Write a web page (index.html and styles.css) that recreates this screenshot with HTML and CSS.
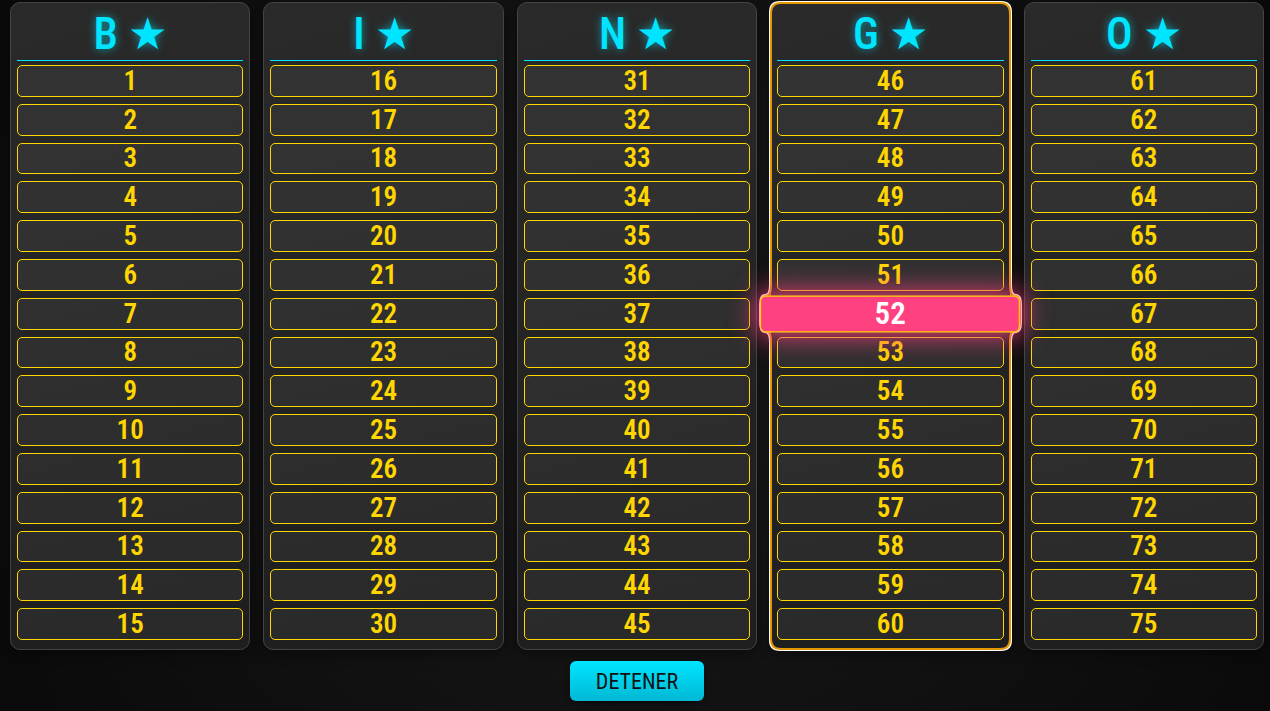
FILE: index.html
```html
<!DOCTYPE html>
<html lang="es">
<head>
<meta charset="utf-8">
<meta name="viewport" content="width=device-width, initial-scale=1">
<title>Bingo</title>
<link rel="stylesheet" href="styles.css">
</head>
<body>
<main class="board" id="board"></main>
<footer class="controls"><button class="stop" type="button">DETENER</button></footer>
<script src="board.js"></script>
</body>
</html>
```
FILE: styles.css
```css
* {
  box-sizing: border-box;
}

body {
  margin: 0;
  min-height: 100vh;
  display: flex;
  flex-direction: column;
  padding: 2px 6px 10px 10px;
  gap: 11px;
  overflow: hidden;
  background: radial-gradient(circle, #1a1a1a, #0a0a0a);
  font-family: "Roboto Condensed", "Liberation Sans Narrow", "Liberation Sans", sans-serif;
}

.board {
  flex: 1;
  display: grid;
  grid-template-columns: repeat(5, 1fr);
  gap: 13px;
}

.column {
  display: flex;
  flex-direction: column;
  gap: 7px;
  padding: 6px 6px 9px;
  border: 1px solid #444;
  border-radius: 10px;
  background: linear-gradient(165deg, #2a2a2a, #1e1e1e);
  box-shadow: 0 4px 12px rgba(0, 0, 0, 0.4);
}

.column.active {
  position: relative;
  border-color: #e59700;
  outline: #e59700 auto 1px;
}

.heading {
  margin: 0 0 -3px;
  height: 52px;
  border-bottom: 1px solid #00e5ff;
  color: #00e5ff;
  font-size: 44px;
  font-weight: 500;
  line-height: 50px;
  text-align: center;
  text-shadow: 0 0 8px rgba(0, 229, 255, 0.6);
}

.cell {
  flex: 1;
  display: flex;
  align-items: center;
  justify-content: center;
  border: 1px solid #ffd600;
  border-radius: 5px;
  background: rgba(255, 255, 255, 0.05);
  color: #ffd600;
  font-size: 27px;
  font-weight: 600;
  line-height: 28px;
}

.cell.called {
  z-index: 1;
  background: #ff4081;
  color: #fff;
  transform: scale(1.15);
  box-shadow: 0 0 24px 2px #ff4081;
}

.controls {
  display: flex;
  justify-content: center;
}

.stop {
  height: 40px;
  padding: 0 26px;
  border: 0;
  border-radius: 6px;
  background: linear-gradient(#00e5ff, #00b8d4);
  box-shadow: 0 2px 6px rgba(0, 0, 0, 0.5);
  color: #121212;
  font-family: inherit;
  font-size: 22px;
}
```
FILE: board.js
```js
const board = document.getElementById("board");
const called = 52;

[..."BINGO"].forEach((letter, index) => {
  const column = document.createElement("section");
  column.className = "column";
  const heading = document.createElement("h2");
  heading.className = "heading";
  heading.textContent = letter + " ★";
  column.append(heading);
  for (let n = index * 15 + 1; n <= index * 15 + 15; n++) {
    const cell = document.createElement("div");
    cell.className = "cell";
    cell.textContent = n;
    if (n === called) {
      cell.classList.add("called");
      column.classList.add("active");
    }
    column.append(cell);
  }
  board.append(column);
});
```
